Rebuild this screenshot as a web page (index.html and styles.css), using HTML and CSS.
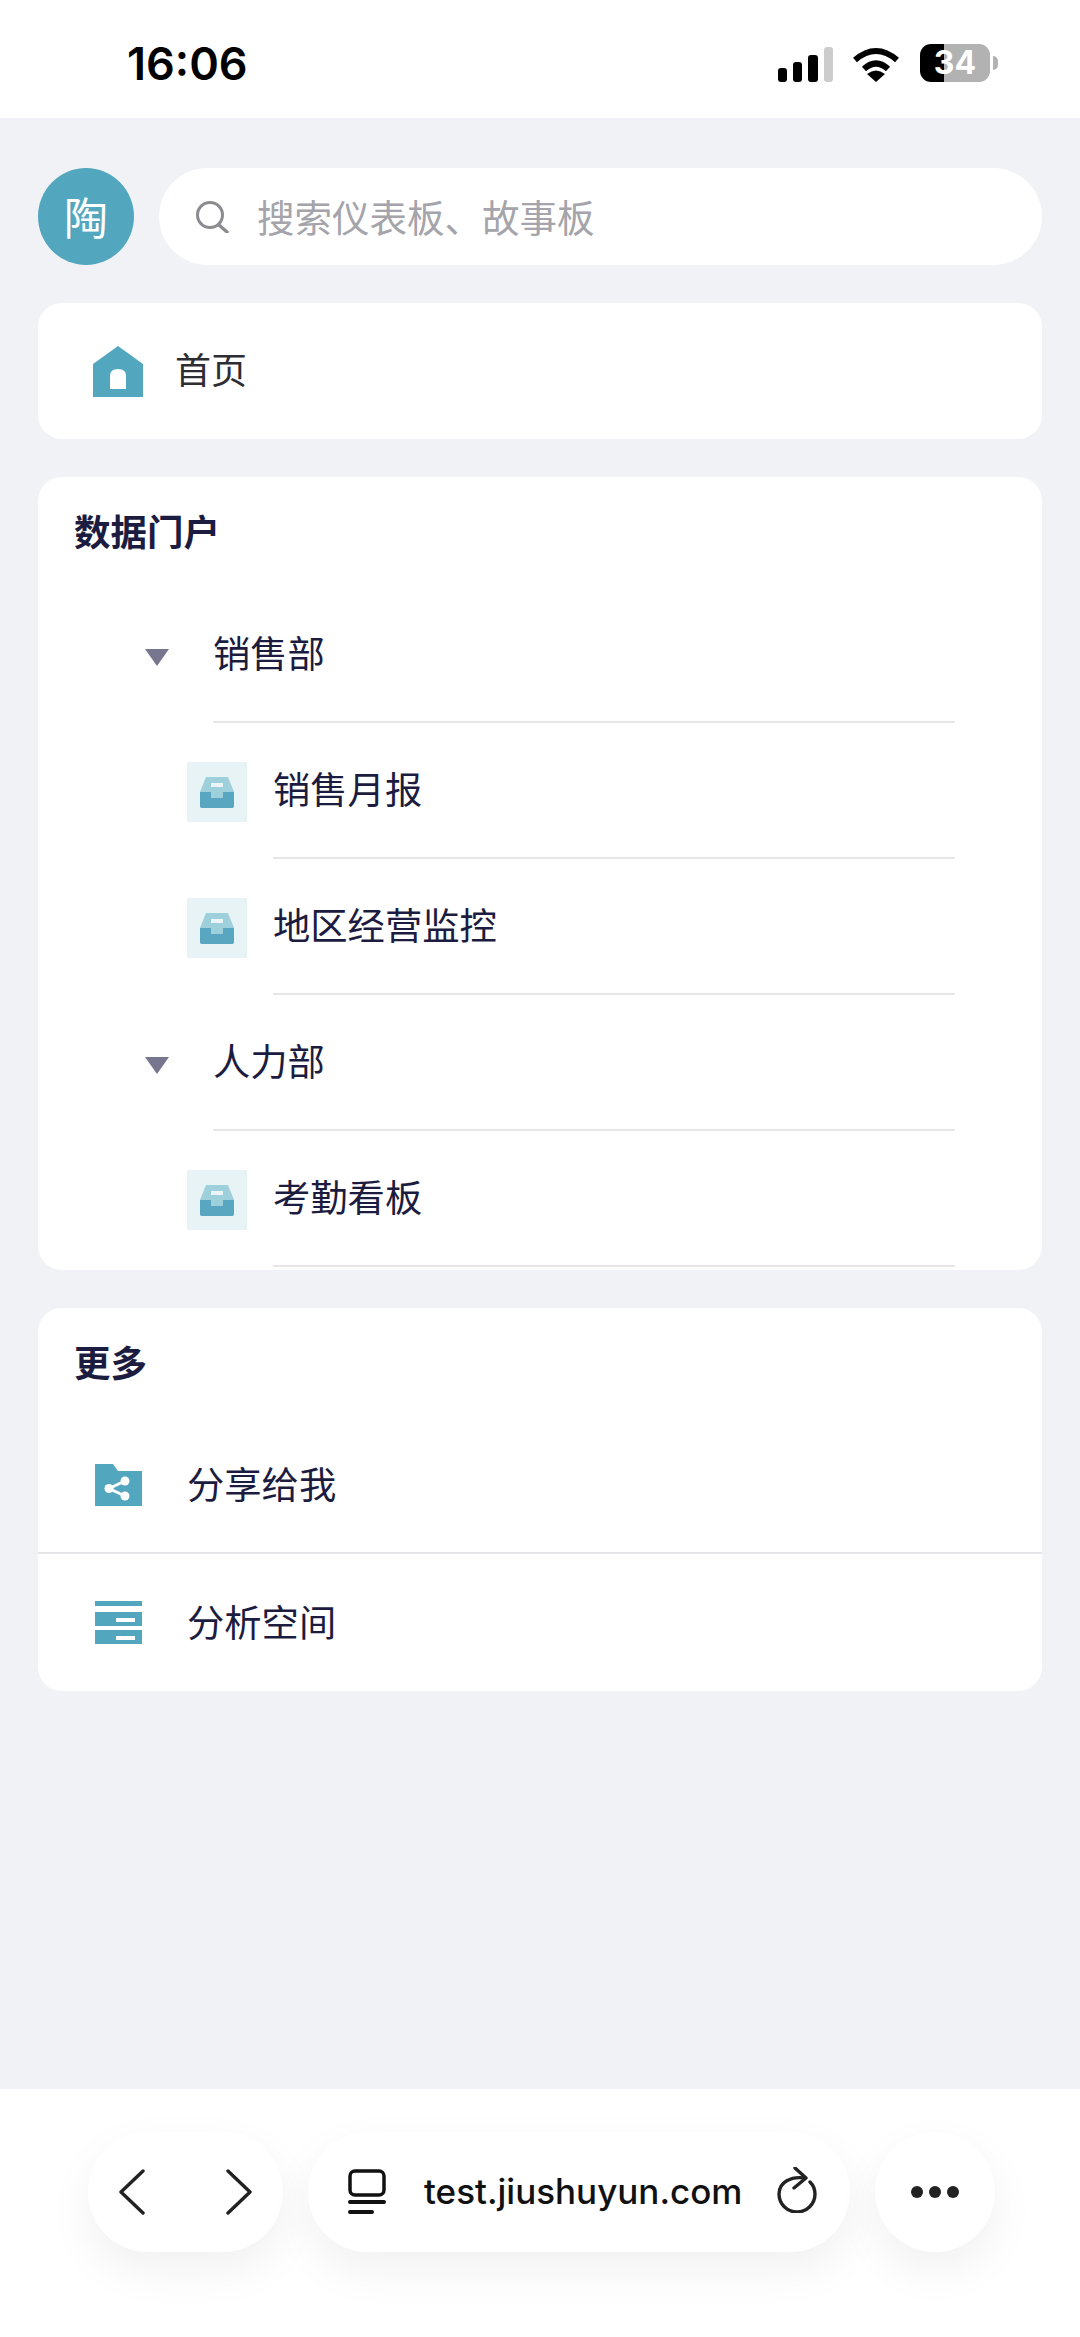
FILE: index.html
```html
<!DOCTYPE html>
<html lang="zh-CN">
<head>
<meta charset="utf-8">
<title>首页</title>
<link rel="stylesheet" href="styles.css">
</head>
<body>
<div class="phone">
  <header class="status">
    <span class="time">16:06</span>
    <div class="status-icons">
      <svg class="signal" width="55" height="35" viewBox="0 0 55 35"><rect x="0" y="21" width="9" height="14" rx="3" fill="#000"/><rect x="15" y="15" width="9" height="20" rx="3" fill="#000"/><rect x="30" y="8" width="10" height="27" rx="3" fill="#000"/><rect x="46" y="0" width="9" height="35" rx="3" fill="#ccc"/></svg>
      <svg class="wifi" width="48" height="35" viewBox="0 0 48 35"><path d="M3 13Q24 -5 45 13" fill="none" stroke="#000" stroke-width="6"/><path d="M12 22Q24 11 36 22" fill="none" stroke="#000" stroke-width="6"/><path d="M24 35L15 27Q24 20 33 27Z" fill="#000"/></svg>
      <div class="battery"><span class="battery-text">34</span></div>
      <span class="battery-nub"></span>
    </div>
  </header>
  <main class="main">
    <div class="top">
      <div class="avatar">陶</div>
      <div class="search">
        <svg width="34" height="32" viewBox="0 0 34 32"><circle cx="15" cy="14" r="12.5" fill="none" stroke="#8b8b90" stroke-width="3"/><path d="M24 24L32 31" stroke="#8b8b90" stroke-width="3.4" stroke-linecap="round"/></svg>
        <span class="search-text">搜索仪表板、故事板</span>
      </div>
    </div>
    <section class="card home">
      <svg width="50" height="51" viewBox="0 0 50 51"><path d="M25 0L50 18V51H0V18Z" fill="#52a7bf"/><path d="M17 43V30Q17 23 25 23Q33 23 33 30V43Z" fill="#fff"/></svg>
      <span class="home-text">首页</span>
    </section>
    <section class="card">
      <h2 class="card-title">数据门户</h2>
      <div class="group"><span class="caret"></span><div class="line">销售部</div></div>
      <div class="sub">
        <span class="tile"><svg width="34" height="31" viewBox="0 0 34 31"><path d="M6 0H28L34 15V29Q34 31 32 31H2Q0 31 0 29V15Z" fill="#9ed0db"/><path d="M0 15H11V21H23V15H34V29Q34 31 32 31H2Q0 31 0 29Z" fill="#58a6c0"/><rect x="11" y="6" width="12" height="4" fill="#e9f5f7"/></svg></span>
        <div class="line">销售月报</div>
      </div>
      <div class="sub">
        <span class="tile"><svg width="34" height="31" viewBox="0 0 34 31"><path d="M6 0H28L34 15V29Q34 31 32 31H2Q0 31 0 29V15Z" fill="#9ed0db"/><path d="M0 15H11V21H23V15H34V29Q34 31 32 31H2Q0 31 0 29Z" fill="#58a6c0"/><rect x="11" y="6" width="12" height="4" fill="#e9f5f7"/></svg></span>
        <div class="line">地区经营监控</div>
      </div>
      <div class="group"><span class="caret"></span><div class="line">人力部</div></div>
      <div class="sub">
        <span class="tile"><svg width="34" height="31" viewBox="0 0 34 31"><path d="M6 0H28L34 15V29Q34 31 32 31H2Q0 31 0 29V15Z" fill="#9ed0db"/><path d="M0 15H11V21H23V15H34V29Q34 31 32 31H2Q0 31 0 29Z" fill="#58a6c0"/><rect x="11" y="6" width="12" height="4" fill="#e9f5f7"/></svg></span>
        <div class="line">考勤看板</div>
      </div>
      <div class="card-end"></div>
    </section>
    <section class="card">
      <h2 class="card-title">更多</h2>
      <div class="more more-first">
        <svg width="47" height="42" viewBox="0 0 47 42"><path d="M0 0H18L23 7H47V42H0Z" fill="#52a7bf"/><path d="M30 17L14 24.500L30 32" fill="none" stroke="#fff" stroke-width="3"/><circle cx="30" cy="17" r="4.500" fill="#fff"/><circle cx="14" cy="24.500" r="4.500" fill="#fff"/><circle cx="30" cy="32" r="4.500" fill="#fff"/></svg>
        <span class="more-text">分享给我</span>
      </div>
      <div class="more">
        <svg width="47" height="43" viewBox="0 0 47 43"><rect width="47" height="5" fill="#52a7bf"/><path d="M0 11H47V25H0ZM21 17V21H40V17Z" fill="#52a7bf" fill-rule="evenodd"/><path d="M0 29H47V43H0ZM21 35V39H40V35Z" fill="#52a7bf" fill-rule="evenodd"/></svg>
        <span class="more-text">分析空间</span>
      </div>
    </section>
  </main>
  <footer class="bar">
    <div class="pill nav">
      <svg width="26" height="46" viewBox="0 0 26 46"><path d="M24 2L2 23L24 44" fill="none" stroke="#222" stroke-width="3.400" stroke-linecap="round" stroke-linejoin="round"/></svg>
      <svg width="26" height="46" viewBox="0 0 26 46"><path d="M2 2L24 23L2 44" fill="none" stroke="#222" stroke-width="3.400" stroke-linecap="round" stroke-linejoin="round"/></svg>
    </div>
    <div class="pill url">
      <svg width="38" height="46" viewBox="0 0 38 46"><rect x="2" y="2" width="34" height="24" rx="5" fill="none" stroke="#111" stroke-width="3.500"/><rect x="0" y="31" width="38" height="4" rx="2" fill="#111"/><rect x="0" y="41" width="26" height="4" rx="2" fill="#111"/></svg>
      <span class="url-text">test.jiushuyun.com</span>
      <svg class="reload" width="40" height="46" viewBox="0 0 40 46"><path d="M28 11C14 9 2 15 2 27A18 18 0 0 0 38 27C38 22 36 18 33 15" fill="none" stroke="#222" stroke-width="3.400" stroke-linecap="round"/><path d="M18 1L29 11L17 21" fill="none" stroke="#222" stroke-width="3.400" stroke-linecap="round" stroke-linejoin="round"/></svg>
    </div>
    <div class="pill more-btn">
      <svg width="50" height="14" viewBox="0 0 50 14"><circle cx="7" cy="7" r="6" fill="#222"/><circle cx="25" cy="7" r="6" fill="#222"/><circle cx="43" cy="7" r="6" fill="#222"/></svg>
    </div>
  </footer>
</div>
</body>
</html>
```

FILE: styles.css
```css
* { box-sizing: border-box; }
html, body { margin: 0; padding: 0; }
body {
  font-family: "Noto Sans CJK SC", "Noto Sans", sans-serif;
  color: #1c1c40;
  background: #f1f2f6;
}
.phone {
  width: 1080px;
  height: 2337px;
  display: flex;
  flex-direction: column;
  overflow: hidden;
}

/* status bar */
.status {
  height: 118px;
  flex: none;
  background: #fff;
  display: flex;
  padding: 44px 82px 0 127px;
}
.time {
  font-family: Inter, "Liberation Sans", sans-serif;
  font-size: 45px;
  font-weight: 600;
  line-height: 40px;
  color: #000;
}
.status-icons {
  margin-left: auto;
  height: 38px;
  display: flex;
  align-items: flex-end;
}
.signal { margin-right: 19px; }
.wifi { margin-right: 20px; }
.battery {
  width: 70px;
  height: 38px;
  border-radius: 11px;
  background: linear-gradient(90deg, #000 34%, #b2b2b2 34%);
  display: flex;
  align-items: center;
  justify-content: center;
}
.battery-text {
  font-family: Inter, "Liberation Sans", sans-serif;
  font-size: 32px;
  font-weight: 700;
  color: #fff;
  line-height: 38px;
}
.battery-nub {
  width: 5px;
  height: 14px;
  margin: 0 0 12px 3px;
  background: #b2b2b2;
  border-radius: 0 5px 5px 0;
}

/* main */
.main {
  flex: 1;
  padding: 50px 38px 0;
}
.top {
  display: flex;
  gap: 25px;
  margin-bottom: 38px;
}
.avatar {
  width: 96px;
  height: 97px;
  flex: none;
  border-radius: 50%;
  background: #52a7bf;
  color: #fff;
  font-size: 44px;
  padding-bottom: 2px;
  display: flex;
  align-items: center;
  justify-content: center;
}
.search {
  flex: 1;
  height: 97px;
  border-radius: 49px;
  background: #fff;
  display: flex;
  align-items: center;
  gap: 28px;
  padding-left: 36px;
  font-size: 37.5px;
  color: #a4a4aa;
}
.search-text { margin-bottom: 3px; }
.card {
  background: #fff;
  border-radius: 24px;
  margin-bottom: 38px;
  overflow: hidden;
}
.home {
  height: 136px;
  display: flex;
  align-items: center;
  padding-left: 55px;
  gap: 32px;
}
.home-text {
  font-size: 36px;
  margin-bottom: 6px;
  color: #2d2d33;
}
.card-title {
  margin: 0;
  height: 110px;
  padding: 30px 0 0 36px;
  font-size: 36.5px;
  line-height: 48px;
  font-weight: 700;
  color: #1c1c40;
}
.group, .sub {
  height: 136px;
  display: flex;
  align-items: center;
  font-size: 37.3px;
  padding-right: 87px;
}
.group { padding-left: 107px; }
.sub { padding-left: 149px; }
.caret {
  flex: none;
  width: 0;
  height: 0;
  margin: 4px 44px 0 0;
  border-left: 12px solid transparent;
  border-right: 12px solid transparent;
  border-top: 17px solid #76768f;
}
.line {
  flex: 1;
  height: 100%;
  display: flex;
  align-items: center;
  padding-bottom: 4px;
  border-bottom: 2px solid #e6e6e9;
}
.tile {
  flex: none;
  width: 60px;
  height: 60px;
  margin: 2px 26px 0 0;
  background: #e8f3f6;
  display: flex;
  align-items: center;
  justify-content: center;
}
.card-end { height: 3px; }
.more {
  height: 137px;
  display: flex;
  align-items: center;
  padding-left: 57px;
  gap: 45px;
  font-size: 37.3px;
}
.more-first {
  height: 136px;
  border-bottom: 2px solid #e6e6e9;
}
.more-text { margin-bottom: 4px; }

/* browser bar */
.bar {
  height: 248px;
  flex: none;
  background: #fff;
  display: flex;
  gap: 25px;
  padding: 43px 0 0 88px;
  align-items: flex-start;
}
.pill {
  height: 120px;
  border-radius: 60px;
  background: #fff;
  box-shadow: 0 18px 46px rgba(0, 0, 0, 0.06);
  display: flex;
  align-items: center;
}
.nav {
  width: 195px;
  padding: 0 31px;
  justify-content: space-between;
}
.url {
  width: 542px;
  padding: 0 33px 0 40px;
}
.url-text {
  margin: 0 0 3px 38px;
  font-family: Inter, "Liberation Sans", sans-serif;
  font-size: 35px;
  font-weight: 500;
  color: #111;
}
.reload {
  margin: 0 0 5px auto;
}
.more-btn {
  width: 120px;
  justify-content: center;
}
```
